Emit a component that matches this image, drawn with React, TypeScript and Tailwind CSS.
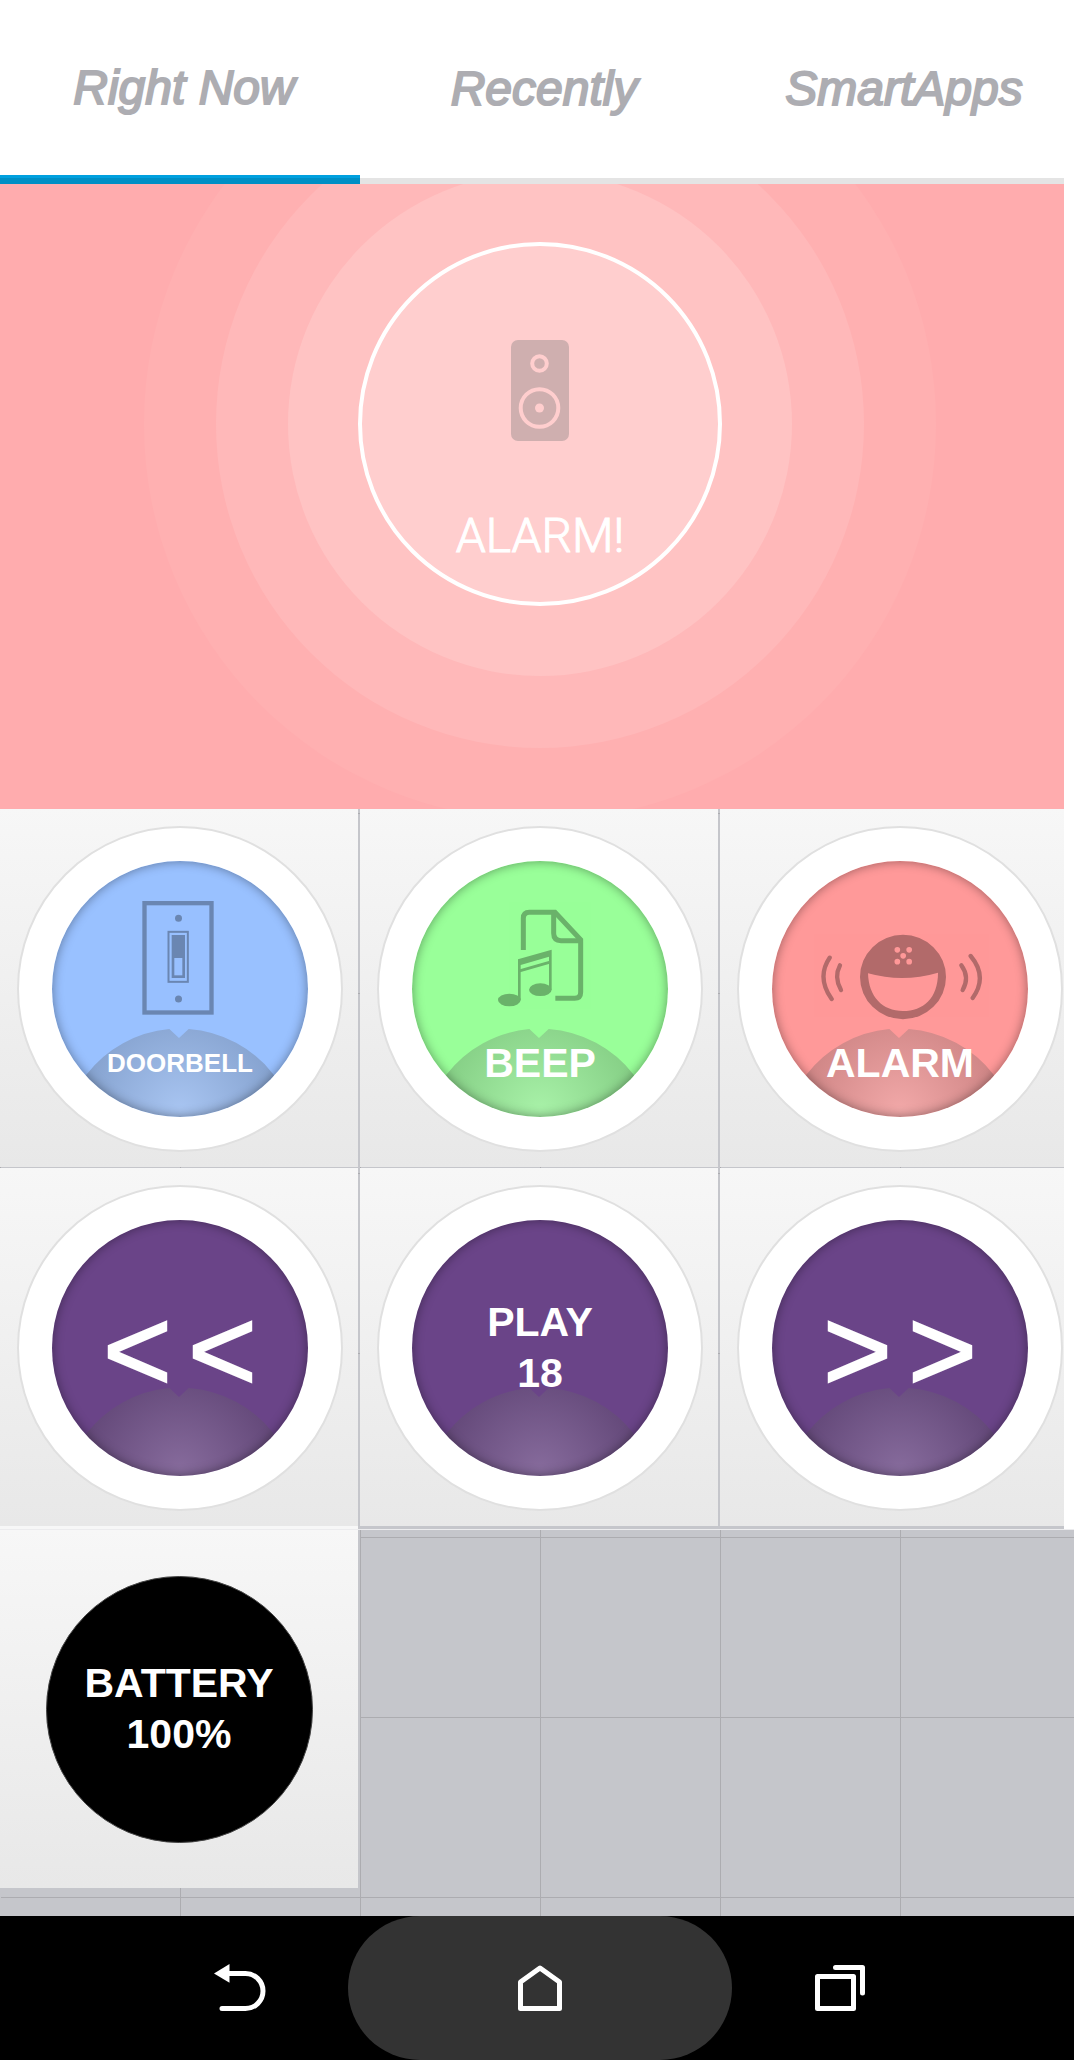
import type { ReactNode } from "react";

const gridPaper =
  "bg-[#c5c6cb] bg-[linear-gradient(to_right,#acacb0_1px,transparent_1px),linear-gradient(to_bottom,#acacb0_1px,transparent_1px)] bg-[size:180px_180px]";

function Tab({ label, active = false }: { label: string; active?: boolean }) {
  return (
    <button
      type="button"
      role="tab"
      aria-selected={active}
      className="flex h-[184px] flex-col justify-end text-center text-[48px] leading-[60px] italic text-[#adadb2] [-webkit-text-stroke:2px_#adadb2]"
    >
      <span className="flex w-full flex-1 items-center justify-center pl-2">{label}</span>
      {active ? (
        <span className="h-[9px] w-full border-t-[3px] border-[#00a0df] bg-[#008fc5]" />
      ) : (
        <span className="h-[6px] w-full bg-[#e4e4e4]" />
      )}
    </button>
  );
}

function SpeakerIcon() {
  return (
    <svg width="58" height="101" viewBox="0 0 58 101" aria-hidden="true">
      <rect width="58" height="101" rx="7" fill="#cfafaf" />
      <circle cx="28.500" cy="23.500" r="7.300" fill="none" stroke="#ffcece" strokeWidth="4" />
      <circle cx="28.500" cy="68" r="18.800" fill="none" stroke="#ffcece" strokeWidth="4" />
      <circle cx="28.500" cy="68" r="4.500" fill="#ffcece" />
    </svg>
  );
}

function SwitchIcon() {
  return (
    <g transform="translate(-156 -183)" opacity="0.3">
      <rect x="433.500" y="309.500" width="201" height="328" fill="none" stroke="#000" strokeWidth="13" />
      <circle cx="535.500" cy="355" r="10.500" />
      <circle cx="535.500" cy="597" r="10.500" />
      <rect x="505.500" y="395.500" width="58" height="150" fill="none" stroke="#000" strokeWidth="6" />
      <rect x="519" y="409" width="32" height="121" fill="none" stroke="#000" strokeWidth="8" />
      <rect x="519" y="409" width="32" height="65" />
    </g>
  );
}

function MusicFileIcon() {
  return (
    <g transform="translate(-156 -183)" opacity="0.3">
      <g fill="none" stroke="#000" strokeWidth="15">
        <path d="M490 450V355Q490 337 508 337H585L662 419V577Q662 595 644 595H586" />
        <path d="M581 340V400Q581 422 603 422H662" />
      </g>
      <ellipse cx="448" cy="600" rx="34" ry="19" />
      <ellipse cx="541" cy="569" rx="34" ry="19" />
      <path d="M474 478L575 449V569H567V470L482 495V601H474Z" />
      <path d="M480 508L569 482V491L480 517Z" />
    </g>
  );
}

function SirenIcon() {
  return (
    <g transform="translate(-174 -183)" opacity="0.3">
      <path
        fillRule="evenodd"
        d="M438 531A129 126.500 0 0 1 696 531A129 126.500 0 0 1 438 531ZM462 520Q567 549 672 518C672 595 628 633 567 633C505 633 464 590 462 520ZM541.500 449.500a8.500 8.500 0 1 0 17 0a8.500 8.500 0 1 0-17 0M577 449.500a8.500 8.500 0 1 0 17 0a8.500 8.500 0 1 0-17 0M559 467.500a8.500 8.500 0 1 0 17 0a8.500 8.500 0 1 0-17 0M541.500 485a8.500 8.500 0 1 0 17 0a8.500 8.500 0 1 0-17 0M577 485a8.500 8.500 0 1 0 17 0a8.500 8.500 0 1 0-17 0"
      />
      <g fill="none" stroke="#000" strokeWidth="13" strokeLinecap="round">
        <path d="M347 473Q307 532 353 597" />
        <path d="M378 496Q359 532 381 570" />
        <path d="M742 496Q768 532 746 570" />
        <path d="M770 468Q822 530 776 594" />
      </g>
    </g>
  );
}

function Dial({
  name,
  color,
  icon,
  children,
}: {
  name: string;
  color: string;
  icon?: ReactNode;
  children: ReactNode;
}) {
  return (
    <button
      type="button"
      aria-label={name}
      className="flex aspect-square items-center justify-center overflow-hidden bg-linear-to-b from-[#f7f7f7] to-[#e8e8e8] pt-[2px] pl-[2px]"
    >
      <span className="flex size-[326px] shrink-0 items-center justify-center rounded-full border-2 border-[#e0e0e0] bg-white">
        <span className={`relative flex size-[256px] overflow-hidden rounded-full ${color}`}>
          <svg viewBox="0 0 768 768" className="absolute inset-0 size-full" aria-hidden="true">
            <defs>
              <radialGradient id="hump" gradientUnits="userSpaceOnUse" cx="384" cy="750" r="300">
                <stop offset="0" stopColor="#cfcfcf" />
                <stop offset="1" stopColor="#555" />
              </radialGradient>
            </defs>
            <path
              d="M103 641A355 355 0 0 1 352 504L381 531L410 504A355 355 0 0 1 665 641L768 768H0Z"
              fill="url(#hump)"
              opacity="0.280"
            />
            {icon}
          </svg>
          <span className="absolute inset-0 rounded-full shadow-[inset_0_0_11px_rgba(0,0,0,0.4)]" />
          <span className="relative flex size-full justify-center font-bold text-white">{children}</span>
        </span>
      </span>
    </button>
  );
}

function Chevrons({ glyph }: { glyph: string }) {
  return (
    <span className="flex items-center gap-4 pt-1 text-[118px] leading-[120px] font-normal [-webkit-text-stroke:2px_#fff]">
      <span>{glyph}</span>
      <span>{glyph}</span>
    </span>
  );
}

export default function App() {
  return (
    <div className="flex min-h-screen flex-col bg-white pb-[6px] font-['Liberation_Sans',Arial,sans-serif]">
      <div className="overflow-hidden pr-[10px]">
        <div className="overflow-hidden">
          <div role="tablist" className="grid w-[calc(100%+16px)] grid-cols-3">
            <Tab label="Right Now" active />
            <Tab label="Recently" />
            <Tab label="SmartApps" />
          </div>

          <main className="flex h-[625px] w-[calc(100%+16px)] justify-center overflow-hidden bg-[#ffacae] pt-[58px]">
            <div className="flex size-[364px] flex-col items-center rounded-full border-4 border-white bg-[#ffcece] pt-[94px] shadow-[0_0_0_70px_#ffc3c3,0_0_0_142px_#ffb8b9,0_0_0_214px_#ffb0b1]">
              <SpeakerIcon />
              <h1 className="mt-[65px] font-[Roboto,sans-serif] text-[48px] leading-[60px] font-light text-white [-webkit-text-stroke:1px_#fff]">
                ALARM!
              </h1>
            </div>
          </main>

          <section
            className={`grid w-[calc(100%+14px)] grid-cols-3 gap-x-[2px] gap-y-px bg-[position:0_4px] ${gridPaper}`}
          >
            <Dial name="Doorbell" color="bg-[#99c1ff]" icon={<SwitchIcon />}>
              <span className="self-end pb-7 text-[26px] leading-[51px]">DOORBELL</span>
            </Dial>
            <Dial name="Beep" color="bg-[#99ff99]" icon={<MusicFileIcon />}>
              <span className="self-end pb-7 text-[41px] leading-[51px]">BEEP</span>
            </Dial>
            <Dial name="Alarm" color="bg-[#ff9999]" icon={<SirenIcon />}>
              <span className="self-end pb-7 text-[41px] leading-[51px]">ALARM</span>
            </Dial>
            <Dial name="Previous track" color="bg-[#6a4488]">
              <Chevrons glyph="<" />
            </Dial>
            <Dial name="Play track 18" color="bg-[#6a4488]">
              <span className="self-center text-[41px] leading-[51px]">
                PLAY
                <br />
                18
              </span>
            </Dial>
            <Dial name="Next track" color="bg-[#6a4488]">
              <Chevrons glyph=">" />
            </Dial>
          </section>
          <div className="grid h-[3px] w-[calc(100%+14px)] grid-cols-3 gap-x-[2px] bg-[#c5c6cb]">
            <div className="bg-[#f7f7f7]" />
          </div>
        </div>
      </div>

      <section
        className={`flex-1 overflow-hidden border-t border-[#ececee] bg-[position:0_7px] shadow-[inset_1px_0_0_#c5c6cb] ${gridPaper}`}
      >
        <div className="grid w-[calc(100%+4px)] grid-cols-3 gap-x-[2px]">
          <div className="flex aspect-square items-center justify-center bg-linear-to-b from-[#f7f7f7] to-[#e8e8e8] shadow-[2px_0_0_#c5c6cb]">
            <div className="flex size-[267px] items-center justify-center rounded-full border border-[#444] bg-black text-center text-[41px] leading-[51px] font-bold text-white">
              <p>
                BATTERY
                <br />
                100%
              </p>
            </div>
          </div>
        </div>
      </section>

      <nav className="flex h-[144px] justify-center bg-black pl-[6px] text-white">
        <button type="button" aria-label="Back" className="flex w-[216px] items-center justify-center">
          <svg width="52" height="48" viewBox="0 0 52 48" fill="none" stroke="currentColor" strokeWidth="5">
            <path d="M13 9.500H31.500A17.500 17.500 0 0 1 31.500 44.500H8" strokeLinecap="round" />
            <path d="M0 9.400L15.500 0V18.800Z" fill="currentColor" stroke="none" />
          </svg>
        </button>
        <button
          type="button"
          aria-label="Home"
          className="flex w-[384px] items-center justify-center rounded-full bg-[#333]"
        >
          <svg width="44" height="46" viewBox="0 0 44 46" fill="none" stroke="currentColor" strokeWidth="5">
            <path d="M2.500 17L22 3L41.500 17V43.500H2.500Z" strokeLinejoin="round" />
          </svg>
        </button>
        <button type="button" aria-label="Recent apps" className="flex w-[216px] items-center justify-center">
          <svg
            width="50"
            height="46"
            viewBox="0 0 50 46"
            fill="none"
            stroke="currentColor"
            strokeWidth="5"
            strokeLinecap="round"
            strokeLinejoin="round"
          >
            <rect x="2.500" y="11.500" width="36" height="32" />
            <path d="M20.500 2.500H47.500V28" />
          </svg>
        </button>
      </nav>
    </div>
  );
}
